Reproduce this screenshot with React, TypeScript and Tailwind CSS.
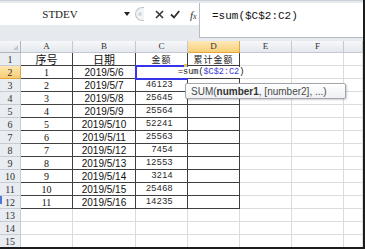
import React from 'react';

type Row = { a: string; b: string; c: string };

const data: Row[] = [
  { a: '1', b: '2019/5/6', c: '' },
  { a: '2', b: '2019/5/7', c: '46123' },
  { a: '3', b: '2019/5/8', c: '25645' },
  { a: '4', b: '2019/5/9', c: '25564' },
  { a: '5', b: '2019/5/10', c: '52241' },
  { a: '6', b: '2019/5/11', c: '25563' },
  { a: '7', b: '2019/5/12', c: '7454' },
  { a: '8', b: '2019/5/13', c: '12553' },
  { a: '9', b: '2019/5/14', c: '3214' },
  { a: '10', b: '2019/5/15', c: '25468' },
  { a: '11', b: '2019/5/16', c: '14235' },
];

// G is only partly visible, its letter is cut off
const cols = ['A', 'B', 'C', 'D', 'E', 'F', ''];
const rowNums = Array.from({ length: 15 }, (_, i) => i + 1);

function FormulaBar() {
  return (
    <div className="flex h-[41px] border-t border-[#c9d0d8] bg-[#e6e9ed] pt-[2px]">
      <div className="flex h-[22px] w-[199px] items-center bg-white">
        <div className="w-[120px] text-center font-['Liberation_Serif',serif] text-[11px] text-[#222]">STDEV</div>
        {/* dropdown */}
        <svg width="6" height="4" viewBox="0 0 6 4" className="ml-[4px]">
          <path d="M0 0h6L3 4z" fill="#222" />
        </svg>
        {/* grip */}
        <div className="ml-[5px] flex h-[14px] w-[9px] items-center justify-center rounded-l-full border border-r-0 border-[#bfc5cc] bg-[#f3f4f6]">
          <div className="h-[4px] w-[4px] rounded-full bg-[#d4d8dd]" />
        </div>
        <svg width="9" height="9" viewBox="0 0 9 9" className="ml-[11px]">
          <path d="M1 1l7 7M8 1L1 8" stroke="#3c3c3c" strokeWidth="1.7" />
        </svg>
        <svg width="10" height="9" viewBox="0 0 10 9" className="ml-[6px]">
          <path d="M1 4.5l3 3L9.2 1" stroke="#2e2e2e" strokeWidth="1.8" fill="none" />
        </svg>
        <div className="ml-[10px] font-['Liberation_Serif',serif] italic text-[#333]">
          <span className="text-[11px]">f</span>
          <span className="text-[8px]">x</span>
        </div>
      </div>
      <div className="h-[35px] flex-1 border-l border-b border-[#b3bcc6] bg-white pl-[12px] pt-[5px] font-['Liberation_Mono',monospace] text-[11px] text-[#111]">
        =sum($C$2:C2)
      </div>
    </div>
  );
}

function cellBorder(r: number, c: number) {
  const inTable = r <= 12 && c < 4;
  return inTable ? 'border-r border-b border-[#3f3f3f]' : 'border-r border-b border-[#dcdcdc]';
}

function Sheet() {
  return (
    <div className="grid grid-cols-[21px_52px_63px_52px_52px_52px_52px_1fr] grid-rows-[12px_repeat(15,13px)]">
      {/* corner */}
      <div className="relative border-r border-b border-[#aeb6bf] bg-gradient-to-b from-[#f6f7f9] to-[#e3e7ec]">
        <svg width="5" height="5" viewBox="0 0 5 5" className="absolute right-[2px] bottom-[2px]">
          <path d="M5 0v5H0z" fill="#c3c8ce" />
        </svg>
      </div>
      {cols.map((c, i) => (
        <div
          key={i}
          className={
            c === 'D'
              ? 'flex items-center justify-center border-r border-b border-[#e2a83e] bg-gradient-to-b from-[#fde9b8] to-[#f7cf78] font-["Liberation_Serif",serif] text-[9px] text-[#333]'
              : 'flex items-center justify-center border-r border-b border-[#c3c9d0] bg-gradient-to-b from-[#f7f8fa] to-[#e4e8ed] font-["Liberation_Serif",serif] text-[9px] text-[#333]'
          }
        >
          {c}
        </div>
      ))}
      {rowNums.map((r) => {
        const d = r >= 2 && r <= 12 ? data[r - 2] : null;
        return (
          <React.Fragment key={r}>
            <div
              className={
                r === 2
                  ? 'flex items-center justify-center border-r border-b border-[#e2a83e] bg-gradient-to-b from-[#fde7b0] to-[#f7cd74] font-["Liberation_Serif",serif] text-[10px] text-[#333]'
                  : 'flex items-center justify-center border-r border-b border-[#c6ccd3] bg-[#e9ecf0] font-["Liberation_Serif",serif] text-[10px] text-[#333]'
              }
            >
              {r}
            </div>
            {cols.map((c, ci) => (
              <div key={ci} className={`flex items-center ${cellBorder(r, ci)}`}>
                {r === 1 && ci === 0 && (
                  <span className="w-full text-center font-['Noto_Sans_CJK_SC',sans-serif] text-[11px] leading-none text-[#111]">序号</span>
                )}
                {r === 1 && ci === 1 && (
                  <span className="w-full text-center font-['Noto_Sans_CJK_SC',sans-serif] text-[11px] leading-none text-[#111]">日期</span>
                )}
                {r === 1 && ci === 2 && (
                  <span className="w-full text-center font-['Noto_Sans_CJK_SC',sans-serif] text-[9px] leading-none tracking-[1px] text-[#222]">金额</span>
                )}
                {r === 1 && ci === 3 && (
                  <span className="w-full text-center font-['Noto_Sans_CJK_SC',sans-serif] text-[9px] leading-none tracking-[1px] text-[#222]">累计金额</span>
                )}
                {d && ci === 0 && (
                  <span className="w-full text-center font-['Liberation_Serif',serif] text-[10px] text-[#111]">{d.a}</span>
                )}
                {d && ci === 1 && (
                  <span className="w-full text-center font-['Liberation_Sans',sans-serif] text-[10px] text-[#111]">{d.b}</span>
                )}
                {d && ci === 2 && (
                  <span className="w-full pr-[14px] text-right font-['Liberation_Sans',sans-serif] text-[9px] tracking-[0.4px] text-[#2a2a2a]">{d.c}</span>
                )}
              </div>
            ))}
          </React.Fragment>
        );
      })}
    </div>
  );
}

export default function App() {
  return (
    <div className="relative h-[249px] w-[365px] overflow-hidden border-r-2 border-b-2 border-[#1c1c1c] bg-white font-['Liberation_Sans',sans-serif]">
      <FormulaBar />
      <Sheet />

      {/* C2 range reference */}
      <div className="absolute left-[135px] top-[65px] h-[15px] w-[53px] border-2 border-[#3434e8]" />
      <div className="absolute left-[184px] top-[64px] h-[3px] w-[3px] bg-[#e8c64a]" />

      {/* D2 in edit mode */}
      <div className="absolute left-[178px] top-[67px] h-[11px] w-[69px] bg-white font-['Liberation_Mono',monospace] text-[8.5px] leading-[11px] text-[#111]">
        =sum(<span className="text-[#3a3ad8]">$C$2:C2</span>)
      </div>

      {/* function tooltip */}
      <div className="absolute left-[185px] top-[83px] flex h-[16px] w-[161px] items-center rounded-[2px] border border-[#a3a7ad] bg-gradient-to-b from-white to-[#eef0f3] pl-[5px] text-[10px] text-[#4a4a4a] shadow-[1px_1px_2px_rgba(0,0,0,0.2)]">
        SUM(<span className="font-bold text-[#333]">number1</span>, [number2], ...)
      </div>

      <div className="absolute left-0 top-[196px] h-[8px] w-[2px] bg-[#4a78d6]" />
    </div>
  );
}
